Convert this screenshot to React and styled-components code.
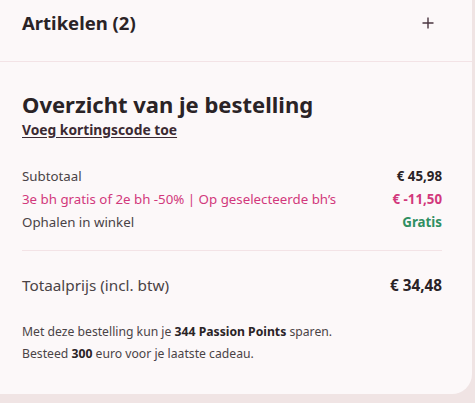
import React from 'react'
import styled, { createGlobalStyle } from 'styled-components'

const GlobalStyle = createGlobalStyle`
  html, body {
    margin: 0;
    padding: 0;
    background: #f0e4e4;
  }
  body {
    font-family: "Noto Sans", "Lato", sans-serif;
    color: #2a2326;
  }
`

const Card = styled.div`
  width: 472px;
  background: #fcf8f9;
  border-radius: 0 0 20px 0;
  padding-bottom: 29px;
`

const Header = styled.div`
  height: 62px;
  padding: 0 38px 16px 22px;
  display: flex;
  align-items: center;
  justify-content: space-between;
  border-bottom: 1px solid #f3e3e6;
  box-sizing: border-box;
`

const HeaderTitle = styled.h2`
  margin: 0;
  font-size: 18.5px;
  font-weight: 700;
  color: #2a2326;
`

const PlusIcon = () => (
  <svg width="12" height="12" viewBox="0 0 12 12">
    <path d="M6 0.5v11M0.5 6h11" stroke="#4a3540" strokeWidth="1.4" fill="none" />
  </svg>
)

const Body = styled.div`
  padding: 28px 30px 0 22px;
`

const Title = styled.h1`
  margin: 0;
  font-size: 22px;
  font-weight: 700;
  line-height: 28px;
  color: #2a2326;
`

const CodeLink = styled.a`
  display: inline-block;
  margin-top: 2px;
  font-size: 13.8px;
  font-weight: 700;
  color: #3b2a32;
  text-decoration: underline;
  text-underline-offset: 2px;
`

const Lines = styled.div`
  margin-top: 26px;
  display: flex;
  flex-direction: column;
  gap: 2px;
  padding-bottom: 17px;
  border-bottom: 1px solid #f3e3e6;
`

const Row = styled.div`
  display: flex;
  justify-content: space-between;
  align-items: baseline;
  font-size: 13.3px;
  line-height: 21px;
  color: ${p => p.$color || '#4a4346'};
`

const Amount = styled.span`
  font-weight: 700;
  color: ${p => p.$color || '#2a2326'};
`

const TotalRow = styled.div`
  display: flex;
  justify-content: space-between;
  align-items: baseline;
  margin-top: 22px;
  font-size: 15.3px;
  line-height: 24px;
  color: #4a4346;
`

const TotalAmount = styled.span`
  font-weight: 700;
  color: #2a2326;
`

const Note = styled.p`
  margin: 24px 0 0;
  font-size: 12.2px;
  line-height: 22px;
  color: #4a4346;

  b {
    color: #2a2326;
  }
`

export default function App() {
  return (
    <>
      <GlobalStyle />
      <Card>
        <Header>
          <HeaderTitle>Artikelen (2)</HeaderTitle>
          <PlusIcon />
        </Header>
        <Body>
          <Title>Overzicht van je bestelling</Title>
          <CodeLink href="#">Voeg kortingscode toe</CodeLink>
          <Lines>
            <Row>
              <span>Subtotaal</span>
              <Amount>€ 45,98</Amount>
            </Row>
            <Row $color="#d2387c">
              <span>3e bh gratis of 2e bh -50% | Op geselecteerde bh’s</span>
              <Amount $color="#d2387c">€ -11,50</Amount>
            </Row>
            <Row>
              <span>Ophalen in winkel</span>
              <Amount $color="#2f8f62">Gratis</Amount>
            </Row>
          </Lines>
          <TotalRow>
            <span>Totaalprijs (incl. btw)</span>
            <TotalAmount>€ 34,48</TotalAmount>
          </TotalRow>
          <Note>
            Met deze bestelling kun je <b>344 Passion Points</b> sparen.
            <br />
            Besteed <b>300</b> euro voor je laatste cadeau.
          </Note>
        </Body>
      </Card>
    </>
  )
}
